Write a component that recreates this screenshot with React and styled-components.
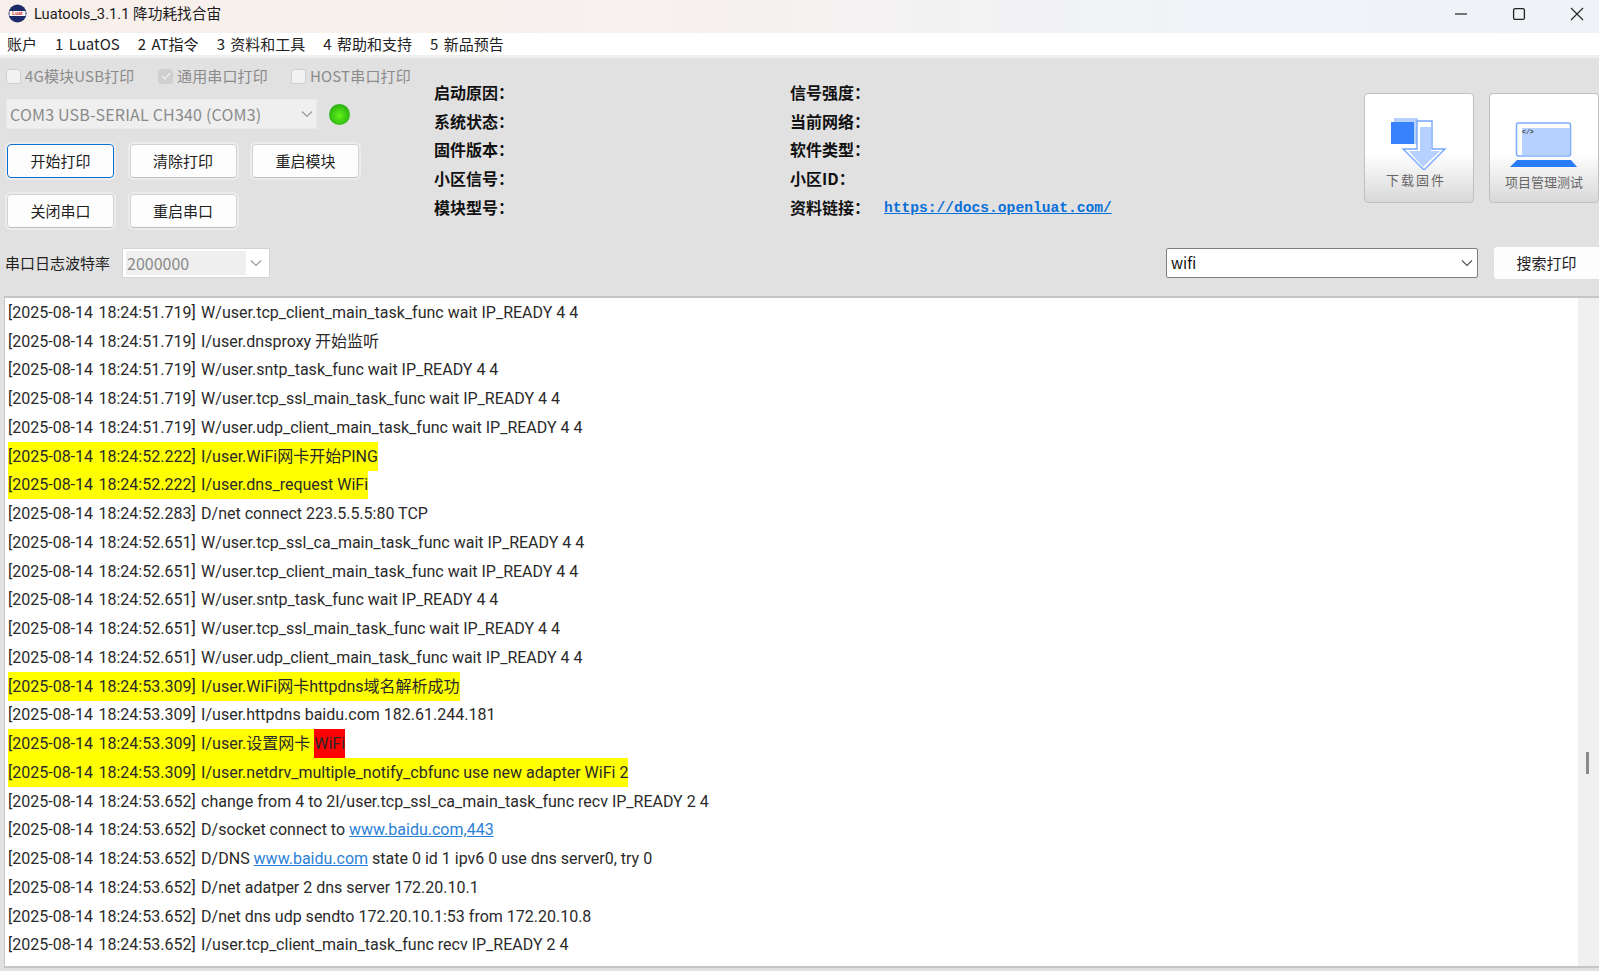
import React from 'react';
import styled, { createGlobalStyle } from 'styled-components';

const CJK = '"Noto Sans CJK SC"';
const Global = createGlobalStyle`
  html, body { margin: 0; padding: 0; height: 100%; overflow: hidden; background: #e1e1e1; }
  #root { height: 100%; }
  * { box-sizing: border-box; }
`;

const Window = styled.div`
  width: 1599px; height: 971px; display: flex; flex-direction: column;
  background: #e1e1e1; font-family: ${CJK}, "Liberation Sans", sans-serif; color: #1a1a1a; overflow: hidden;
`;
const TitleBar = styled.div`
  height: 33px; flex: none; display: flex; align-items: center; padding: 0 0 6px 8px;
  background: linear-gradient(90deg, #f8efea 0%, #f7f1ef 40%, #f0f3f7 75%, #eff2f6 100%);
`;
const TitleText = styled.span`
  margin-left: 7px; font-family: Roboto, ${CJK}, sans-serif; font-size: 14.7px; line-height: 20px; color: #1c1c1c; white-space: nowrap;
`;
const WinControls = styled.div`
  margin-left: auto; display: flex; align-items: center; gap: 38px; padding-right: 12px;
`;
const MenuBar = styled.div`
  height: 22px; flex: none; background: #fff; display: flex; align-items: center; gap: 18px; padding-left: 7px;
  font-size: 15px; line-height: 20px; word-spacing: 2px; color: #222; white-space: nowrap; box-shadow: 0 3px 0 #efefef;
`;
const Top = styled.div`
  flex: none; height: 241px; padding-top: 3px; display: flex; flex-direction: column;
`;
const Upper = styled.div`
  height: 187px; flex: none; display: flex;
`;
const Left = styled.div`
  width: 434px; flex: none; padding: 9px 0 0 6px; display: flex; flex-direction: column;
`;
const CheckRow = styled.div`
  display: flex; align-items: center; height: 18px; font-size: 15px; line-height: 18px; letter-spacing: .15px; color: #8b8b8b; white-space: nowrap;
`;
const CheckItem = styled.label`
  display: flex; align-items: center; gap: 4px; width: ${p => p.$w}px;
`;
const Box = styled.span`
  width: 15px; height: 15px; border: 1px solid #d0d0d0; border-radius: 3px;
  background: ${p => (p.$on ? '#cfcfcf' : '#f2f2f2')};
  display: flex; align-items: center; justify-content: center; flex: none;
`;
const PortRow = styled.div`
  display: flex; align-items: center; margin-top: 14px; gap: 12px;
`;
const ComboPort = styled.div`
  width: 311px; height: 30px; background: #efefef; border: 1px solid #e9e9e9; display: flex; align-items: center;
  padding: 0 3px 0 3px; font-size: 16px; line-height: 20px; letter-spacing: .2px; color: #8a8a8a; justify-content: space-between; white-space: nowrap;
`;
const Led = styled.span`
  width: 21px; height: 21px; border-radius: 50%; flex: none;
  background: radial-gradient(circle at 50% 55%, #62f21a 0%, #3ecb12 45%, #18941a 100%);
`;
const ButtonGrid = styled.div`
  display: grid; grid-template-columns: repeat(3, 107px); grid-auto-rows: 34px; column-gap: 15.5px; row-gap: 16px;
  margin: 15px 0 0 1px;
`;
const Btn = styled.button`
  background: #fdfdfd; border: ${p => (p.$focus ? '1px solid #0a6fd2' : '1px solid #d2d2d2')};
  border-bottom: ${p => (p.$focus ? '1px solid #0a6fd2' : '1px solid #bdbdbd')};
  border-radius: 4px; font: 15px/20px ${CJK}, "Liberation Sans", sans-serif; color: #222; padding: 0;
  outline: 2px solid #ececec; outline-offset: 0;
`;
const Info = styled.div`
  width: 356px; flex: none; padding-top: 19.5px; display: flex; flex-direction: column;
`;
const InfoRow = styled.div`
  height: 28.7px; flex: none; display: flex; align-items: center; font-size: 16px; line-height: 20px; font-weight: 700; color: #111; white-space: nowrap;
`;
const InfoCol = styled.div`
  width: ${p => p.$w}px; flex: none;
`;
const Link = styled.a`
  margin-left: 14px; position: relative; top: 1px; font-family: "Liberation Mono", monospace; font-size: 14.6px; font-weight: 700; color: #0a6fd8; text-decoration: underline;
`;
const Tiles = styled.div`
  margin-left: auto; display: flex; gap: 15px; padding-top: 35px;
`;
const Tile = styled.div`
  width: ${p => p.$w}px; height: 110px; border: 1px solid #c0c0c0; border-radius: 4px;
  background: linear-gradient(180deg, #fff 0%, #fff 55%, #d8d8d8 100%);
  display: flex; flex-direction: column; align-items: center; padding-top: ${p => p.$pt}px;
`;
const TileLabel = styled.span`
  font-size: 13px; line-height: 16px; color: #666; margin-top: ${p => p.$mt}px; letter-spacing: ${p => p.$sp || 0}px; white-space: nowrap; margin-right: ${p => p.$mr || 0}px;
`;
const Lower = styled.div`
  display: flex; align-items: center; padding: 0 0 0 5px; height: 36px; font-size: 15px; line-height: 20px;
`;
const BaudLabel = styled.span`
  width: 117px; flex: none; color: #222; white-space: nowrap;
`;
const BaudCombo = styled.div`
  width: 148px; height: 30px; background: #fff; border: 1px solid #d4d4d4; display: flex; align-items: center; padding: 3px; 
`;
const BaudValue = styled.div`
  width: 120px; height: 24px; background: #efefef; color: #8a8a8a; font-size: 16px; display: flex; align-items: center; padding: 0 0 1px 1px;
`;
const Arrow = styled.span`
  flex: 1; display: flex; justify-content: center;
`;
const SearchCombo = styled.div`
  margin-left: auto; width: 312px; height: 30px; background: #fff; border: 1px solid #7f7f7f; border-radius: 2px; display: flex; align-items: center;
  justify-content: space-between; padding: 0 4px 1px 4px; font-size: 15px; color: #111;
`;
const SearchBtn = styled.button`
  margin-left: 15px; width: 106px; height: 34px; background: #fdfdfd; border: 1px solid #e0e0e0; border-radius: 4px 0 0 4px; border-right: none;
  font: 15px/20px ${CJK}, "Liberation Sans", sans-serif; color: #222; padding: 0;
`;
const LogFrame = styled.div`
  flex: none; height: 672px; margin-left: 4px; border-top: 2px solid #c6c6c6; border-left: 1px solid #c6c6c6; border-bottom: 2px solid #c6c6c6;
  background: #fff; display: flex;
`;
const Log = styled.div`
  flex: 1; padding: 0 0 0 3px; min-width: 0;
`;
const Row = styled.div`
  height: 28.75px; display: flex; align-items: stretch; font-family: Roboto, ${CJK}, sans-serif; font-size: 16px; line-height: 20px; color: #2a2a2a; white-space: pre;
`;
const Seg = styled.span`
  display: flex; align-items: center; padding-top: 1px; background: ${p => p.$bg || 'transparent'};
`;
const Stamp = styled.span`
  word-spacing: 1.5px;
`;
const A = styled.a`
  color: #2c7fd6; text-decoration: underline;
`;
const Track = styled.div`
  width: 21px; flex: none; background: #f0f0f0; position: relative;
`;
const Thumb = styled.div`
  position: absolute; left: 8px; top: 454px; width: 3px; height: 22px; background: #8a8a8a;
`;
const Foot = styled.div`
  flex: 1; background: #e1e1e1;
`;

const Chevron = ({ c = '#9a9a9a' }) => (
  <svg width="12" height="8" viewBox="0 0 12 8" fill="none"><path d="M1 1.5 6 6.5 11 1.5" stroke={c} strokeWidth="1.2" /></svg>
);

const Logo = () => (
  <svg width="19" height="19" viewBox="0 0 19 19">
    <circle cx="9.5" cy="9.5" r="9" fill="#1b2a68" />
    <rect x="1.5" y="7" width="16" height="5" fill="#fff" />
    <text x="9.5" y="11" textAnchor="middle" fontSize="5" fontWeight="700" fill="#d8232a" fontFamily="Liberation Sans">Luat</text>
  </svg>
);

const DownloadIcon = () => (
  <svg width="58" height="52" viewBox="0 0 58 52">
    <rect x="4" y="0" width="24" height="26" fill="#b6d0ff" />
    <path d="M27 3h15v28h13L34 52 13 31h14z" fill="#fff" stroke="#74a7ff" strokeWidth="1.4" />
    <path d="M30 9h11v24h9L33 49 19 33h11z" fill="#b6d0ff" />
    <rect x="1" y="4" width="23" height="22" fill="#3883fb" />
  </svg>
);
const ProjectIcon = () => (
  <svg width="70" height="47" viewBox="0 0 70 47">
    <rect x="7.5" y="1" width="54" height="33" rx="2" fill="#fff" stroke="#7dadfc" strokeWidth="1.6" />
    <rect x="13" y="6" width="48" height="27" fill="#b6d0ff" />
    <text x="13" y="12" fontSize="6.5" fontWeight="700" fill="#444" fontFamily="Liberation Mono">&lt;/&gt;</text>
    <path d="M8 38h54l6 7H1z" fill="#2a7bf6" />
  </svg>
);

const Y = '#ffff00';
const rows = [
  [['[2025-08-14 18:24:51.719] W/user.tcp_client_main_task_func wait IP_READY 4 4']],
  [['[2025-08-14 18:24:51.719] I/user.dnsproxy 开始监听']],
  [['[2025-08-14 18:24:51.719] W/user.sntp_task_func wait IP_READY 4 4']],
  [['[2025-08-14 18:24:51.719] W/user.tcp_ssl_main_task_func wait IP_READY 4 4']],
  [['[2025-08-14 18:24:51.719] W/user.udp_client_main_task_func wait IP_READY 4 4']],
  [['[2025-08-14 18:24:52.222] I/user.WiFi网卡开始PING', Y]],
  [['[2025-08-14 18:24:52.222] I/user.dns_request WiFi', Y]],
  [['[2025-08-14 18:24:52.283] D/net connect 223.5.5.5:80 TCP']],
  [['[2025-08-14 18:24:52.651] W/user.tcp_ssl_ca_main_task_func wait IP_READY 4 4']],
  [['[2025-08-14 18:24:52.651] W/user.tcp_client_main_task_func wait IP_READY 4 4']],
  [['[2025-08-14 18:24:52.651] W/user.sntp_task_func wait IP_READY 4 4']],
  [['[2025-08-14 18:24:52.651] W/user.tcp_ssl_main_task_func wait IP_READY 4 4']],
  [['[2025-08-14 18:24:52.651] W/user.udp_client_main_task_func wait IP_READY 4 4']],
  [['[2025-08-14 18:24:53.309] I/user.WiFi网卡httpdns域名解析成功', Y]],
  [['[2025-08-14 18:24:53.309] I/user.httpdns baidu.com 182.61.244.181']],
  [['[2025-08-14 18:24:53.309] I/user.设置网卡 ', Y], ['WiFi', '#ff0000']],
  [['[2025-08-14 18:24:53.309] I/user.netdrv_multiple_notify_cbfunc use new adapter WiFi 2', Y]],
  [['[2025-08-14 18:24:53.652] change from 4 to 2I/user.tcp_ssl_ca_main_task_func recv IP_READY 2 4']],
  [['[2025-08-14 18:24:53.652] D/socket connect to '], ['www.baidu.com,443', null, true]],
  [['[2025-08-14 18:24:53.652] D/DNS '], ['www.baidu.com', null, true], [' state 0 id 1 ipv6 0 use dns server0, try 0']],
  [['[2025-08-14 18:24:53.652] D/net adatper 2 dns server 172.20.10.1']],
  [['[2025-08-14 18:24:53.652] D/net dns udp sendto 172.20.10.1:53 from 172.20.10.8']],
  [['[2025-08-14 18:24:53.652] I/user.tcp_client_main_task_func recv IP_READY 2 4']],
];

const menu = ['账户', '1 LuatOS', '2 AT指令', '3 资料和工具', '4 帮助和支持', '5 新品预告'];
const info = [
  ['启动原因：', '信号强度：'],
  ['系统状态：', '当前网络：'],
  ['固件版本：', '软件类型：'],
  ['小区信号：', '小区ID：'],
  ['模块型号：', '资料链接：'],
];

const LogText = ({ text }) => {
  if (text.startsWith('[')) {
    return <span><Stamp>{text.slice(0, 26)}</Stamp>{text.slice(26)}</span>;
  }
  return <span>{text}</span>;
};

export default function App() {
  return (
    <Window>
      <Global />
      <TitleBar>
        <Logo />
        <TitleText>Luatools_3.1.1 降功耗找合宙</TitleText>
        <WinControls>
          <svg width="20" height="12" viewBox="0 0 20 12"><path d="M4 6h12" stroke="#222" strokeWidth="1.2" /></svg>
          <svg width="20" height="14" viewBox="0 0 20 14"><rect x="4.6" y="1.6" width="10.8" height="10.8" rx="1.5" fill="none" stroke="#222" strokeWidth="1.3" /></svg>
          <svg width="20" height="14" viewBox="0 0 20 14"><path d="M4 1l12 12M16 1 4 13" stroke="#222" strokeWidth="1.1" /></svg>
        </WinControls>
      </TitleBar>
      <MenuBar>{menu.map(m => <span key={m}>{m}</span>)}</MenuBar>
      <Top>
        <Upper>
          <Left>
            <CheckRow>
              <CheckItem $w={152}><Box />4G模块USB打印</CheckItem>
              <CheckItem $w={133}>
                <Box $on><svg width="10" height="8" viewBox="0 0 10 8" fill="none"><path d="M1 4l3 3 5-6" stroke="#efefef" strokeWidth="1.3" /></svg></Box>
                通用串口打印
              </CheckItem>
              <CheckItem $w={130}><Box />HOST串口打印</CheckItem>
            </CheckRow>
            <PortRow>
              <ComboPort>COM3 USB-SERIAL CH340 (COM3)<Chevron /></ComboPort>
              <Led />
            </PortRow>
            <ButtonGrid>
              <Btn $focus>开始打印</Btn>
              <Btn>清除打印</Btn>
              <Btn>重启模块</Btn>
              <Btn>关闭串口</Btn>
              <Btn>重启串口</Btn>
            </ButtonGrid>
          </Left>
          <Info>
            {info.map(([a, b], i) => (
              <InfoRow key={a}>
                <InfoCol $w={356}>{a}</InfoCol>
                <span>{b}</span>
                {i === 4 && <Link href="#">https://docs.openluat.com/</Link>}
              </InfoRow>
            ))}
          </Info>
          <Tiles>
            <Tile $w={110} $pt={24}>
              <DownloadIcon />
              <TileLabel $sp={2} $mr={6} $mt={2}>下载固件</TileLabel>
            </Tile>
            <Tile $w={110} $pt={28}>
              <ProjectIcon />
              <TileLabel $mt={5}>项目管理测试</TileLabel>
            </Tile>
          </Tiles>
        </Upper>
        <Lower>
          <BaudLabel>串口日志波特率</BaudLabel>
          <BaudCombo>
            <BaudValue>2000000</BaudValue>
            <Arrow><Chevron /></Arrow>
          </BaudCombo>
          <SearchCombo>wifi<Chevron c="#555" /></SearchCombo>
          <SearchBtn>搜索打印</SearchBtn>
        </Lower>
      </Top>
      <LogFrame>
        <Log>
          {rows.map((r, i) => (
            <Row key={i}>
              {r.map(([t, bg, link], j) => (
                <Seg key={j} $bg={bg}>{link ? <A href="#">{t}</A> : <LogText text={t} />}</Seg>
              ))}
            </Row>
          ))}
        </Log>
        <Track><Thumb /></Track>
      </LogFrame>
      <Foot />
    </Window>
  );
}
